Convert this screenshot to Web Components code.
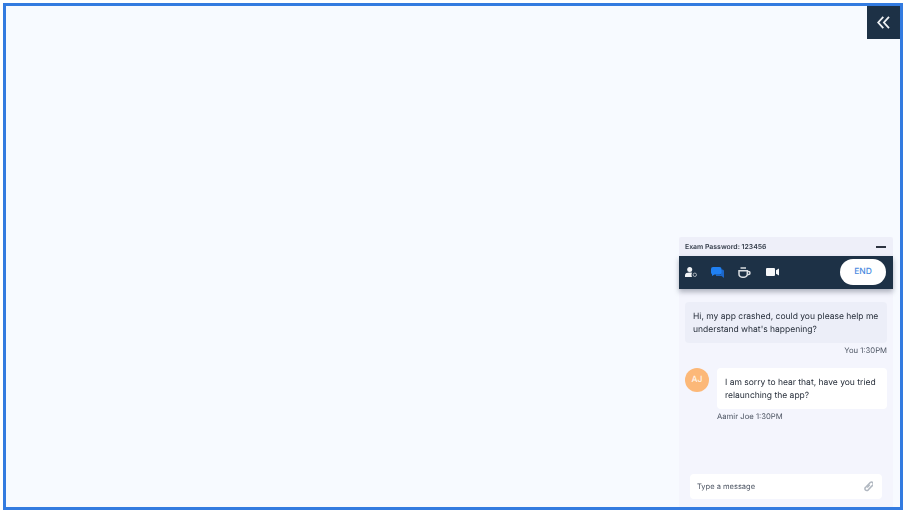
<!DOCTYPE html>
<html>
<head>
<meta charset="utf-8">
<title>Exam chat</title>
<style>
  html, body { margin: 0; height: 100%; background: #fff; }
  body { font-family: "Inter", "Liberation Sans", sans-serif; text-rendering: geometricPrecision; }
</style>
</head>
<body>
<exam-frame>
  <collapse-button slot="top"></collapse-button>
  <chat-panel slot="bottom" password="123456">
    <chat-message mine meta="You 1:30PM">Hi, my app crashed, could you please help me understand what's happening?</chat-message>
    <chat-message initials="AJ" meta="Aamir Joe 1:30PM">I am sorry to hear that, have you tried relaunching the app?</chat-message>
  </chat-panel>
</exam-frame>

<script>
  // Marco azul de la pagina
  class ExamFrame extends HTMLElement {
    constructor() {
      super();
      this.attachShadow({ mode: "open" });
      this.shadowRoot.innerHTML = `
        <style>
          :host {
            display: flex;
            flex-direction: column;
            justify-content: space-between;
            align-items: flex-end;
            box-sizing: border-box;
            width: 900px;
            height: 507px;
            margin: 3px 0 0 3px;
            border: 3px solid #337be0;
            background: #f7faff;
          }
          ::slotted(chat-panel) { margin-right: 7px; }
        </style>
        <slot name="top"></slot>
        <slot name="bottom"></slot>
      `;
    }
  }

  class CollapseButton extends HTMLElement {
    constructor() {
      super();
      this.attachShadow({ mode: "open" });
      this.shadowRoot.innerHTML = `
        <style>
          :host {
            display: flex;
            align-items: center;
            justify-content: center;
            width: 33px;
            height: 33px;
            background: #1d3146;
          }
          svg { width: 13px; height: 13px; filter: blur(.3px); }
        </style>
        <svg viewBox="0 0 13 13" fill="none" stroke="#eef1f4" stroke-width="1.8">
          <path d="M6.300 .8 1.200 6.500l5.100 5.700"/>
          <path d="M12 .8 6.900 6.500l5.100 5.700"/>
        </svg>
      `;
    }
  }

  class ChatPanel extends HTMLElement {
    constructor() {
      super();
      this.attachShadow({ mode: "open" });
      const password = this.getAttribute("password");
      this.shadowRoot.innerHTML = `
        <style>
          :host {
            display: flex;
            flex-direction: column;
            width: 214px;
            height: 270px;
            background: #f4f5fd;
            color: #2c3340;
          }
          .head {
            display: flex;
            align-items: center;
            justify-content: space-between;
            height: 19px;
            padding: 0 6px;
            background: #eeeff9;
            border-radius: 3px 3px 0 0;
            font-size: 6.9px;
            font-weight: 600;
            color: #333c49;
          }
          .head span { filter: blur(.3px); }
          .head i { width: 10px; height: 2px; margin-right: 1px; background: #2c3340; }
          .bar {
            display: flex;
            align-items: center;
            box-sizing: border-box;
            height: 33px;
            padding: 0 7px 1px 6px;
            background: #1d3146;
            box-shadow: 0 3px 5px rgba(40, 50, 70, .35);
          }
          .bar svg { display: block; flex: none; filter: blur(.35px); }
          .end {
            margin-left: auto;
            width: 46px;
            height: 26px;
            border-radius: 13px;
            background: #fff;
            color: #4a8ae0;
            font-size: 8.5px;
            font-weight: 500;
            line-height: 26px;
            text-align: center;
          }
          .log {
            flex: 1;
            display: flex;
            flex-direction: column;
            gap: 12px;
            padding: 13px 6px 0;
          }
          .input {
            display: flex;
            align-items: center;
            justify-content: space-between;
            height: 25px;
            margin: 0 11px 8px;
            padding: 0 9px 0 7px;
            border-radius: 4px;
            background: #fff;
            font-size: 7.5px;
            color: #4d5563;
          }
          .input span { filter: blur(.25px); }
          .input svg { filter: blur(.4px); }
        </style>
        <div class="head"><span>Exam Password: ${password}</span><i></i></div>
        <div class="bar">
          <svg width="12" height="10" viewBox="0 0 12 10" fill="#f2f4f6" style="margin-right:14px">
            <circle cx="4.700" cy="2.500" r="2.500"/>
            <path d="M0 10V8.300C0 6.200 2 5.500 4.700 5.500c1 0 1.800.1 2.500.3-.5.7-.7 1.400-.7 2.100 0 .8.200 1.500.7 2.100z"/>
            <circle cx="9.800" cy="7.800" r="1.700" fill="none" stroke="#aab2ba" stroke-width="1"/>
          </svg>
          <svg width="13" height="11" viewBox="0 0 13 11" style="margin-right:14px">
            <path fill="#1c66c8" d="M10 2.500h1.500A1.500 1.500 0 0 1 13 4v7l-2.500-2H5V7.500h5z"/>
            <path fill="#2080f2" d="M2 0h6.500a2 2 0 0 1 2 2v3.500a2 2 0 0 1-2 2H3.500L1 9V7.200A2 2 0 0 1 0 5.500V2a2 2 0 0 1 2-2z"/>
          </svg>
          <svg width="13" height="11" viewBox="0 0 13 11" fill="none" stroke="#d9dde1" stroke-width="1.500" style="margin-right:15px">
            <path d="M1 3.700h8.300v3.500a3 3 0 0 1-3 3H4a3 3 0 0 1-3-3z"/>
            <path d="M9.300 4.500h1.200a1.400 1.400 0 0 1 0 3H9.300"/>
            <path d="M2.500 1h5.500"/>
          </svg>
          <svg width="13" height="8" viewBox="0 0 13 8" fill="#f6f7f9">
            <rect x="0" y="0" width="9" height="8" rx="1"/>
            <path d="M10 2.200 13 .5v7L10 5.800z"/>
          </svg>
          <span class="end">END</span>
        </div>
        <div class="log"><slot></slot></div>
        <div class="input">
          <span>Type a message</span>
          <svg width="9" height="11" viewBox="0 0 9 11" fill="none" stroke="#b0b7c0" stroke-width="1.500">
            <path d="M6.500 1.200 1.500 6.400a1.800 1.800 0 0 0 2.600 2.700l3.800-4.200a1.900 1.900 0 0 0-1.400-3.700"/>
            <path d="M5.700 3.700 3.200 6.500"/>
          </svg>
        </div>
      `;
    }
  }

  class ChatMessage extends HTMLElement {
    constructor() {
      super();
      this.attachShadow({ mode: "open" });
      const mine = this.hasAttribute("mine");
      const initials = this.getAttribute("initials");
      this.shadowRoot.innerHTML = `
        <style>
          :host { display: flex; gap: 8px; }
          .avatar {
            flex: none;
            width: 24px;
            height: 24px;
            border-radius: 50%;
            background: #fcb878;
            color: #fff5ea;
            font-size: 8.5px;
            font-weight: 500;
            line-height: 24px;
            text-align: center;
          }
          .body { flex: 1; min-width: 0; }
          .bubble {
            box-sizing: border-box;
            height: 41px;
            padding: 8.500px 4px 0 8px;
            border-radius: 4px;
            background: ${mine ? "#eceef8" : "#fff"};
            font-size: 8.5px;
            line-height: 13px;
            color: #1f2733;
          }
          .bubble slot { display: block; filter: blur(.25px); }
          .meta {
            margin-top: 3px;
            font-size: 7.7px;
            line-height: 10px;
            color: #4d5563;
            text-align: ${mine ? "right" : "left"};
            filter: blur(.25px);
          }
        </style>
        ${initials ? `<div class="avatar">${initials}</div>` : ""}
        <div class="body">
          <div class="bubble"><slot></slot></div>
          <div class="meta">${this.getAttribute("meta")}</div>
        </div>
      `;
    }
  }

  customElements.define("exam-frame", ExamFrame);
  customElements.define("collapse-button", CollapseButton);
  customElements.define("chat-message", ChatMessage);
  customElements.define("chat-panel", ChatPanel);
</script>
</body>
</html>
